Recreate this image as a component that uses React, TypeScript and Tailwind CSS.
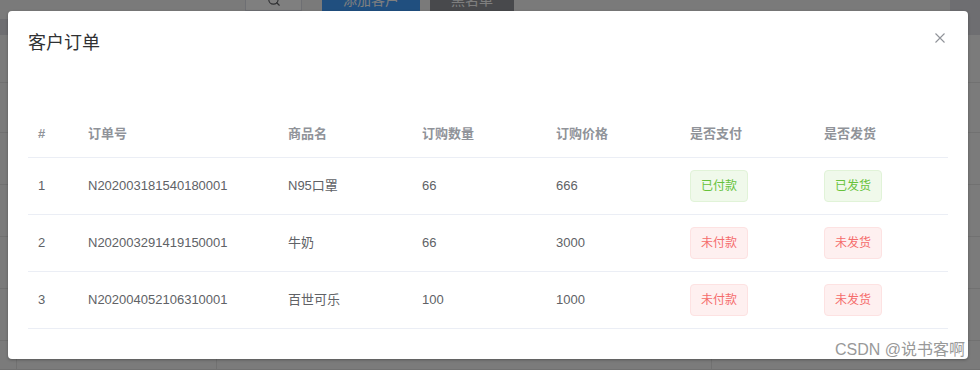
import { Search } from "lucide-react";

type Order = {
  no: string;
  name: string;
  qty: number;
  price: number;
  paid: boolean;
  shipped: boolean;
};

const orders: Order[] = [
  { no: "N202003181540180001", name: "N95口罩", qty: 66, price: 666, paid: true, shipped: true },
  { no: "N202003291419150001", name: "牛奶", qty: 66, price: 3000, paid: false, shipped: false },
  { no: "N202004052106310001", name: "百世可乐", qty: 100, price: 1000, paid: false, shipped: false },
];

const FONT = "font-['Liberation_Sans','Noto_Sans_CJK_SC',sans-serif]";

function Tag({ ok, children }: { ok: boolean; children: React.ReactNode }) {
  return (
    <span
      className={`inline-flex h-8 items-center rounded px-[10px] text-xs border ${
        ok
          ? "bg-[#f0f9eb] border-[#e1f3d8] text-[#67c23a]"
          : "bg-[#fef0f0] border-[#fde2e2] text-[#f56c6c]"
      }`}
    >
      {children}
    </span>
  );
}

// page behind the modal mask
function Backdrop() {
  return (
    <div className="flex h-full flex-col bg-[#f4f4f4]">
      <div className="flex h-[11px] items-end overflow-hidden">
        <div className="w-[245px]" />
        <div className="flex h-[22px] w-[57px] items-center justify-center border border-[#dcdfe6] bg-white text-[#606266]">
          <Search size={14} />
        </div>
        <div className="w-5" />
        <div className="flex h-[22px] w-[98px] items-center justify-center bg-[#409eff] text-sm text-white">添加客户</div>
        <div className="w-[10px]" />
        <div className="flex h-[22px] w-[84px] items-center justify-center bg-[#909399] text-sm text-white">黑名单</div>
        <div className="flex-1" />
        <div className="h-full w-[30px] bg-[#dcdce2]" />
      </div>
      <div className="flex h-[9px]">
        <div className="flex-1" />
        <div className="w-[30px] bg-[#dcdce2]" />
      </div>
      <div className="h-4 bg-[#dcdce2]" />
      {[49, 52, 53, 53, 54, 53, 30].map((h, i) => (
        <div key={i} className="flex border-b border-[#e2e2e2] bg-[#f6f6f6]" style={{ height: h }}>
          <div className="w-[17px] border-r border-[#e2e2e2]" />
          <div className="w-[200px] border-r border-[#e2e2e2]" />
          <div className="w-[495px] border-r border-[#e2e2e2]" />
          <div className="flex-1" />
        </div>
      ))}
    </div>
  );
}

const cols = ["w-[50px]", "w-[200px]", "w-[134px]", "w-[134px]", "w-[134px]", "w-[134px]", "w-[134px]"];
const heads = ["#", "订单号", "商品名", "订购数量", "订购价格", "是否支付", "是否发货"];

export default function App() {
  return (
    <div className={`relative h-[370px] w-[980px] overflow-hidden ${FONT}`}>
      <Backdrop />
      <div className="absolute inset-0 bg-black/50" />

      <div className="absolute left-2 top-[11px] h-[348px] w-[960px] rounded-sm bg-white shadow-[0_1px_3px_rgba(0,0,0,0.3)]">
        <div className="px-5 pb-[10px] pt-5">
          <span className="text-lg leading-6 text-[#303133]">客户订单</span>
        </div>
        <button className="absolute right-[23px] top-[22px] h-[10px] w-[10px] text-[#909399]">
          <svg width="10" height="10" viewBox="0 0 10 10" fill="none" stroke="currentColor" strokeWidth="1.1">
            <path d="M0.5 0.5 L9.5 9.5 M9.5 0.5 L0.5 9.5" />
          </svg>
        </button>

        <div className="px-5 pb-[31px] pt-[44px] text-[13px]">
          <div className="flex h-12 items-center border-b border-[#ebeef5] font-semibold text-[#909399]">
            {heads.map((h, i) => (
              <div key={h} className={`${cols[i]} px-[10px]`}>
                {h}
              </div>
            ))}
          </div>
          {orders.map((o, i) => (
            <div key={o.no} className="flex h-[57px] items-center border-b border-[#ebeef5] text-[#606266]">
              <div className={`${cols[0]} px-[10px]`}>{i + 1}</div>
              <div className={`${cols[1]} px-[10px]`}>{o.no}</div>
              <div className={`${cols[2]} px-[10px]`}>{o.name}</div>
              <div className={`${cols[3]} px-[10px]`}>{o.qty}</div>
              <div className={`${cols[4]} px-[10px]`}>{o.price}</div>
              <div className={`${cols[5]} px-[10px]`}>
                <Tag ok={o.paid}>{o.paid ? "已付款" : "未付款"}</Tag>
              </div>
              <div className={`${cols[6]} px-[10px]`}>
                <Tag ok={o.shipped}>{o.shipped ? "已发货" : "未发货"}</Tag>
              </div>
            </div>
          ))}
        </div>
      </div>

      <div className="absolute bottom-[10px] right-[15px] text-base leading-5 text-[#999999]">
        CSDN @说书客啊
      </div>
    </div>
  );
}
